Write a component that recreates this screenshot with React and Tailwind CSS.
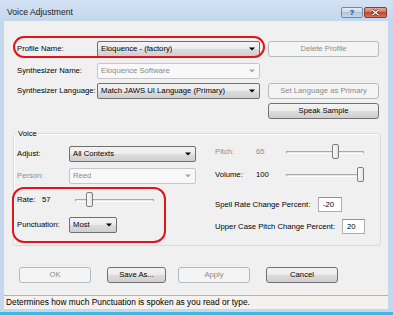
import clsx from 'clsx'

const raised = 'border-[#707070] bg-[linear-gradient(#f3f3f3,#ebebeb_50%,#dddddd_50%,#cfcfcf)] text-black'
const greyed = 'border-[#b5b9bc] bg-[#f4f4f4] text-[#8a8a8a]'

function Arrow({ disabled }) {
  return (
    <svg width="6" height="4" viewBox="0 0 6 4" className="shrink-0">
      <path d="M0 0.5H6L3 3.5Z" fill={disabled ? '#a8a8a8' : '#000'} />
    </svg>
  )
}

function Combo({ value, disabled, className }) {
  return (
    <div
      className={clsx(
        'flex h-[16px] items-center justify-between rounded-[2px] border pl-[3px] pr-[4px]',
        disabled ? 'border-[#c3c7ca] bg-[#f8f8f8] text-[#8a8a8a]' : raised,
        className
      )}
    >
      <span className="truncate">{value}</span>
      <Arrow disabled={disabled} />
    </div>
  )
}

function Btn({ children, disabled, className }) {
  return (
    <button
      type="button"
      className={clsx(
        'flex h-[16px] items-center justify-center rounded-[3px] border leading-none',
        disabled ? greyed : raised,
        className
      )}
    >
      {children}
    </button>
  )
}

function Field({ value, className }) {
  return (
    <div
      className={clsx(
        'flex h-[15px] items-center border border-[#abadb3] border-t-[#8f9297] bg-white pl-[4px]',
        className
      )}
    >
      {value}
    </div>
  )
}

function Slider({ at, className }) {
  return (
    <div className={clsx('relative h-[16px]', className)}>
      <div className="absolute left-0 right-0 top-[7px] h-[3px] border border-[#a9a9a9] border-b-white bg-[#e6e6e6]" />
      <div
        className="absolute top-0 h-[15px] w-[7px] rounded-[2px] border border-[#7c7c7c] bg-[linear-gradient(90deg,#fbfbfb,#e4e4e4)]"
        style={{ left: `calc(${at * 100}% - ${at * 7}px)` }}
      />
    </div>
  )
}

function Row({ label, muted, width, className, children }) {
  return (
    <div className={clsx('flex h-[16px] items-center', className)}>
      <span className={clsx('shrink-0', width, muted && 'text-[#8d8d8d]')}>{label}</span>
      {children}
    </div>
  )
}

export default function App() {
  return (
    <div className="flex h-[315px] w-[393px] flex-col overflow-hidden bg-[#c4d7ed] font-['Liberation_Sans',Arial,sans-serif] text-[7.7px] text-black">
      {/* caption */}
      <div className="flex h-[21px] shrink-0 justify-between bg-[linear-gradient(#d3e2f3,#c3d7ed)] pl-[7px] pr-[6px]">
        <span className="pt-[7px] text-[8.6px] leading-[11px] text-[#1b1b1b]">Voice Adjustment</span>
        <div className="flex gap-[1px] pt-[7px]">
          <div className="flex h-[11px] w-[22px] items-center justify-center rounded-[2px] border border-[#7089ab] bg-[linear-gradient(#e4edf8,#c2d4ea_50%,#afc6e2_50%,#c4d7ee)] text-[8px] font-bold leading-none text-[#23365a]">
            ?
          </div>
          <div className="flex h-[11px] w-[23px] items-center justify-center rounded-[2px] border border-[#8b3b30] bg-[linear-gradient(#e8a797,#d5705c_50%,#c24530_50%,#d6725d)]">
            <svg width="9" height="7" viewBox="0 0 9 7">
              <path d="M1.5 1L7.5 6M7.5 1L1.5 6" stroke="#4a1a14" strokeWidth="2.6" />
              <path d="M1.5 1L7.5 6M7.5 1L1.5 6" stroke="#fff" strokeWidth="1.5" />
            </svg>
          </div>
        </div>
      </div>

      <div className="flex flex-1 pl-[4px] pr-[5px]">
        <div className="relative flex flex-1 flex-col bg-[#f0f0f0]">
          {/* profile block */}
          <div className="flex flex-col pl-[13px] pt-[20px]">
            <Row label="Profile Name:" width="w-[80px]">
              <Combo value="Eloquence - (factory)" className="w-[163px]" />
              <Btn disabled className="ml-[8px] w-[111px]">Delete Profile</Btn>
            </Row>
            <Row label="Synthesizer Name:" width="w-[80px]" className="mt-[6px]">
              <Combo value="Eloquence Software" disabled className="w-[163px]" />
            </Row>
            <Row label="Synthesizer Language:" width="w-[80px]" className="mt-[4px]">
              <Combo value="Match JAWS UI Language (Primary)" className="w-[163px]" />
              <Btn disabled className="ml-[8px] w-[111px]">Set Language as Primary</Btn>
            </Row>
            <div className="mt-[4px] flex h-[16px] pl-[251px]">
              <Btn className="w-[111px]">Speak Sample</Btn>
            </div>
          </div>

          {/* voice group */}
          <div className="relative ml-[9px] mr-[7px] mt-[14px] flex h-[113px] rounded-[3px] border border-[#d2dce3] pl-[3px] pt-[10px] shadow-[inset_1px_1px_0_#fff]">
            <span className="absolute -top-[6px] left-[3px] bg-[#f0f0f0] px-[1px] leading-[11px]">Voice</span>

            <div className="flex w-[179px] flex-col pt-[2px]">
              <Row label="Adjust:" width="w-[52px]">
                <Combo value="All Contexts" className="w-[127px]" />
              </Row>
              <Row label="Person:" muted width="w-[52px]" className="mt-[6px]">
                <Combo value="Reed" disabled className="w-[127px]" />
              </Row>
              <Row label="Rate:" width="w-[25px]" className="mt-[8px]">
                <span className="w-[33px]">57</span>
                <Slider at={0.15} className="w-[79px]" />
              </Row>
              <Row label="Punctuation:" width="w-[52px]" className="mt-[9px]">
                <Combo value="Most" className="w-[48px]" />
              </Row>
            </div>

            <div className="ml-[19px] flex flex-col">
              <Row label="Pitch:" muted width="w-[41px]">
                <span className="w-[30px] text-[#8d8d8d]">65</span>
                <Slider at={0.65} className="w-[78px]" />
              </Row>
              <Row label="Volume:" width="w-[41px]" className="mt-[7px]">
                <span className="w-[30px]">100</span>
                <Slider at={1} className="w-[78px]" />
              </Row>
              <div className="mt-[14px] flex h-[15px] items-center">
                <span className="w-[103px]">Spell Rate Change Percent:</span>
                <Field value="-20" className="w-[24px]" />
              </div>
              <div className="mt-[7px] flex h-[15px] items-center">
                <span className="w-[127px]">Upper Case Pitch Change Percent:</span>
                <Field value="20" className="w-[23px]" />
              </div>
            </div>
          </div>

          {/* dialog buttons */}
          <div className="mt-[21px] flex pl-[15px]">
            <Btn disabled className="w-[72px]">OK</Btn>
            <Btn className="ml-[16px] w-[59px]">Save As...</Btn>
            <Btn disabled className="ml-[12px] w-[72px]">Apply</Btn>
            <Btn className="ml-[16px] w-[72px]">Cancel</Btn>
          </div>

          <div className="flex-1" />
          <div className="flex h-[14px] items-center border-t border-[#b3b3b3] bg-[#f4f1ef] pl-[2px] text-[8.4px]">
            Determines how much Punctuation is spoken as you read or type.
          </div>

          {/* red markers */}
          <div className="pointer-events-none absolute left-[9px] top-[15px] h-[22px] w-[252px] rounded-[11px] border-2 border-[#e3131b]" />
          <div className="pointer-events-none absolute left-[8px] top-[166px] h-[56px] w-[154px] rounded-[12px] border-2 border-[#e3131b]" />
        </div>
      </div>

      <div className="h-[3px] shrink-0 bg-[#c4d7ed]" />
      <div className="h-[3px] shrink-0 bg-[#43b6df]" />
    </div>
  )
}
